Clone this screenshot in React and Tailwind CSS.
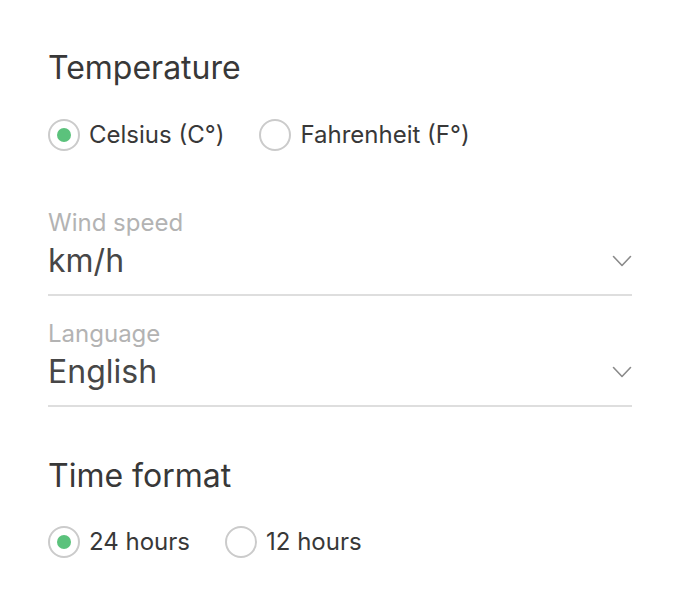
import React, { useState } from 'react';

const font = { fontFamily: 'Inter, "Noto Sans", sans-serif' };

function Radio({ checked, label, onClick }) {
  return (
    <button type="button" onClick={onClick} className="flex items-center gap-[9px]">
      <span className="w-8 h-8 rounded-full border-2 border-[#cbcbcb] flex items-center justify-center bg-white">
        {checked && <span className="w-[14px] h-[14px] rounded-full bg-[#5bc27c]"></span>}
      </span>
      <span className="text-[24px] leading-[32px] text-[#383838]">{label}</span>
    </button>
  );
}

function Chevron() {
  return (
    <svg width="20" height="12" viewBox="0 0 20 12" fill="none" stroke="#8a8a8a" strokeWidth="1.6" strokeLinecap="round" strokeLinejoin="round">
      <path d="M1.5 1.5l8.5 9 8.5-9" />
    </svg>
  );
}

function SelectField({ label, value }) {
  return (
    <div className="border-b-2 border-[#dedede] pb-[13px]">
      <div className="text-[24px] leading-[30px] text-[#b3b3b3]">{label}</div>
      <div className="flex items-center justify-between mt-[3px]">
        <span className="text-[32px] leading-[40px] text-[#474747]">{value}</span>
        <Chevron />
      </div>
    </div>
  );
}

export default function App() {
  const [unit, setUnit] = useState('c');
  const [hours, setHours] = useState('24');

  return (
    <div className="w-[680px] h-[616px] bg-white px-12 pt-[48px]" style={font}>
      <h2 className="text-[32px] leading-[40px] text-[#383838]">Temperature</h2>
      <div className="flex items-center gap-[35px] mt-[31px]">
        <Radio checked={unit === 'c'} label="Celsius (C°)" onClick={() => setUnit('c')} />
        <Radio checked={unit === 'f'} label="Fahrenheit (F°)" onClick={() => setUnit('f')} />
      </div>

      <div className="mt-[57px] space-y-[23px]">
        <SelectField label="Wind speed" value="km/h" />
        <SelectField label="Language" value="English" />
      </div>

      <h2 className="text-[32px] leading-[40px] text-[#383838] mt-[49px]">Time format</h2>
      <div className="flex items-center gap-[35px] mt-[30px]">
        <Radio checked={hours === '24'} label="24 hours" onClick={() => setHours('24')} />
        <Radio checked={hours === '12'} label="12 hours" onClick={() => setHours('12')} />
      </div>
    </div>
  );
}
